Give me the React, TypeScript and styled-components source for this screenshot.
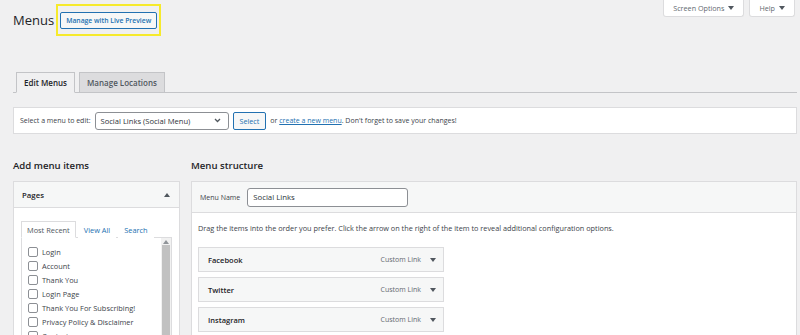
import React from 'react'
import styled, { createGlobalStyle } from 'styled-components';

const GlobalStyle = createGlobalStyle`
    html, body {
        margin: 0;
        padding: 0;
        background: #f0f0f1;
        font-family: "Open Sans", "Noto Sans", sans-serif;
        color: #3c434a;
    }
    * { box-sizing: border-box; }
`

const pages = ['Login', 'Account', 'Thank You', 'Login Page', 'Thank You For Subscribing!', 'Privacy Policy & Disclaimer', 'Contact'];
const menuItems = ['Facebook', 'Twitter', 'Instagram'];

const Caret = ({ up = false }: { up?: boolean }) => (
    <svg width="6" height="4" viewBox="0 0 6 4" style={{ transform: up ? 'rotate(180deg)' : undefined }}>
        <path d="M0 0h6L3 4z" fill="#50575e" />
    </svg>
);

export default function App() {
    return (
        <Wrap>
            <GlobalStyle />
            <TopRow>
                <TitleGroup>
                    <Title>Menus</Title>
                    <Highlight>
                        <OutlineButton $bold>Manage with Live Preview</OutlineButton>
                    </Highlight>
                </TitleGroup>
                <MetaLinks>
                    <MetaTab>Screen Options <Caret /></MetaTab>
                    <MetaTab>Help <Caret /></MetaTab>
                </MetaLinks>
            </TopRow>

            <NavTabs>
                <NavTab $active>Edit Menus</NavTab>
                <NavTab>Manage Locations</NavTab>
            </NavTabs>

            <ManageBar>
                <span>Select a menu to edit:</span>
                <FakeSelect>
                    <span>Social Links (Social Menu)</span>
                    <svg width="7" height="5" viewBox="0 0 7 5">
                        <path d="M1 1l2.5 2.5L6 1" stroke="#50575e" strokeWidth="1.3" fill="none" />
                    </svg>
                </FakeSelect>
                <OutlineButton>Select</OutlineButton>
                <span>or <TextLink>create a new menu</TextLink>. Don't forget to save your changes!</span>
            </ManageBar>

            <Columns>
                <div>
                    <ColumnTitle>Add menu items</ColumnTitle>
                    <Box>
                        <BoxHeader $height={26}>
                            <BoxTitle>Pages</BoxTitle>
                            <Caret up />
                        </BoxHeader>
                        <PagesBody>
                            <InnerTabs>
                                <InnerTab $active>Most Recent</InnerTab>
                                <InnerTab>View All</InnerTab>
                                <InnerTab>Search</InnerTab>
                            </InnerTabs>
                            <ListPanel>
                                <CheckList>
                                    {pages.map((p) => (
                                        <CheckRow key={p}>
                                            <Check type="checkbox" readOnly />
                                            {p}
                                        </CheckRow>
                                    ))}
                                </CheckList>
                                <Scrollbar>
                                    <ScrollArrow><Caret up /></ScrollArrow>
                                    <ScrollThumb />
                                </Scrollbar>
                            </ListPanel>
                        </PagesBody>
                    </Box>
                </div>
                <div>
                    <ColumnTitle>Menu structure</ColumnTitle>
                    <Box>
                        <BoxHeader $height={31}>
                            <NameRow>
                                <span>Menu Name</span>
                                <NameInput value="Social Links" readOnly />
                            </NameRow>
                        </BoxHeader>
                        <StructureBody>
                            <Hint>Drag the items into the order you prefer. Click the arrow on the right of the item to reveal additional configuration options.</Hint>
                            <ItemList>
                                {menuItems.map((m) => (
                                    <MenuItem key={m}>
                                        <ItemTitle>{m}</ItemTitle>
                                        <ItemControls>
                                            Custom Link
                                            <Caret />
                                        </ItemControls>
                                    </MenuItem>
                                ))}
                            </ItemList>
                        </StructureBody>
                    </Box>
                </div>
            </Columns>
        </Wrap>
    )
}

const Wrap = styled.div`
    padding: 0 3px 0 13px;
    height: 335px;
    overflow: hidden;
`

const TopRow = styled.div`
    display: flex;
    justify-content: space-between;
    align-items: flex-start;
`

const TitleGroup = styled.div`
    display: flex;
    align-items: center;
    gap: 2px;
    margin-top: 4px;
`

const Title = styled.h1`
    margin: 0;
    font-size: 13px;
    font-weight: 400;
    color: #1d2327;
    line-height: 20px;
`

const Highlight = styled.div`
    display: flex;
    border: 2px solid #f6ea2c;
    padding: 6px 2px 5px 2px;
`

const OutlineButton = styled.button<{ $bold?: boolean }>`
    font-family: inherit;
    font-size: ${p => p.$bold ? '6.8px' : '7.2px'};
    font-weight: ${p => p.$bold ? 600 : 400};
    color: #2271b1;
    background: #f6f7f7;
    border: 1px solid #2271b1;
    border-radius: 2px;
    height: ${p => p.$bold ? '17px' : '18px'};
    padding: 0 ${p => p.$bold ? '5px' : '6px'};
    cursor: pointer;
`

const MetaLinks = styled.div`
    display: flex;
    gap: 5px;
    padding-right: 2px;
`

const MetaTab = styled.div`
    display: flex;
    align-items: center;
    gap: 4px;
    height: 17px;
    padding: 0 9px 0 9px;
    background: #fff;
    border: 1px solid #dcdcde;
    border-top: none;
    border-radius: 0 0 3px 3px;
    font-size: 7.2px;
    color: #646970;
`

const NavTabs = styled.div`
    display: flex;
    gap: 4px;
    margin-top: 36px;
    padding-left: 3px;
    border-bottom: 1px solid #c3c4c7;
`

const NavTab = styled.div<{ $active?: boolean }>`
    height: 21px;
    margin-bottom: -1px;
    display: flex;
    align-items: center;
    padding: 0 7px;
    font-size: 8px;
    font-weight: 600;
    border: 1px solid #c3c4c7;
    border-bottom: ${p => p.$active ? '1px solid #f0f0f1' : '1px solid #c3c4c7'};
    background: ${p => p.$active ? '#f0f0f1' : '#dcdcde'};
    color: ${p => p.$active ? '#1d2327' : '#50575e'};
`

const ManageBar = styled.div`
    margin-top: 14px;
    height: 27px;
    background: #fff;
    border: 1px solid #dcdcde;
    display: flex;
    align-items: center;
    gap: 4px;
    padding: 0 6px;
    font-size: 7px;
`

const FakeSelect = styled.div`
    width: 134px;
    height: 18px;
    border: 1px solid #8c8f94;
    border-radius: 3px;
    background: #fff;
    display: flex;
    align-items: center;
    justify-content: space-between;
    padding: 0 7px 0 5px;
    font-size: 7.6px;
    color: #2c3338;
`

const TextLink = styled.a`
    color: #2271b1;
    text-decoration: underline;
`

const Columns = styled.div`
    display: grid;
    grid-template-columns: 167px 1fr;
    gap: 11px;
`

const ColumnTitle = styled.h2`
    margin: 25px 0 8px;
    font-size: 9.6px;
    line-height: 14px;
    font-weight: 600;
    color: #1d2327;
`

const Box = styled.div`
    background: #fff;
    border: 1px solid #dcdcde;
    height: 200px;
`

const BoxHeader = styled.div<{ $height: number }>`
    height: ${p => p.$height}px;
    background: #f6f7f7;
    border-bottom: 1px solid #dcdcde;
    display: flex;
    align-items: center;
    justify-content: space-between;
    padding: 0 9px 0 8px;
`

const BoxTitle = styled.h3`
    margin: 0;
    font-size: 7.8px;
    font-weight: 600;
    color: #1d2327;
`

const PagesBody = styled.div`
    padding: 13px 7px 0 7px;
`

const InnerTabs = styled.div`
    display: flex;
    gap: 2px;
`

const InnerTab = styled.div<{ $active?: boolean }>`
    height: 17px;
    margin-bottom: -1px;
    display: flex;
    align-items: center;
    padding: 0 5px;
    font-size: 7.4px;
    border: 1px solid ${p => p.$active ? '#dcdcde' : 'transparent'};
    border-bottom-color: ${p => p.$active ? '#fff' : 'transparent'};
    background: #fff;
    color: ${p => p.$active ? '#50575e' : '#2271b1'};
    position: relative;
`

const ListPanel = styled.div`
    border: 1px solid #dcdcde;
    height: 120px;
    display: flex;
    justify-content: space-between;
`

const CheckList = styled.ul`
    list-style: none;
    margin: 0;
    padding: 7px 0 0 6px;
`

const CheckRow = styled.li`
    display: flex;
    align-items: center;
    gap: 4px;
    height: 14px;
    font-size: 7.4px;
    color: #3c434a;
`

const Check = styled.input`
    appearance: none;
    margin: 0;
    width: 10px;
    height: 10px;
    border: 1px solid #8c8f94;
    border-radius: 2px;
    background: #fff;
`

const Scrollbar = styled.div`
    width: 10px;
    background: #f1f1f1;
    display: flex;
    flex-direction: column;
    align-items: center;
`

const ScrollArrow = styled.div`
    height: 7px;
    display: flex;
    align-items: center;
    opacity: 0.6;
`

const ScrollThumb = styled.div`
    width: 8px;
    flex: 1;
    background: #c1c1c1;
`

const NameRow = styled.div`
    display: flex;
    align-items: center;
    gap: 7px;
    font-size: 7px;
    color: #3c434a;
`

const NameInput = styled.input`
    width: 161px;
    height: 19px;
    border: 1px solid #8c8f94;
    border-radius: 3px;
    padding: 0 5px;
    font-family: inherit;
    font-size: 7.8px;
    color: #2c3338;
    outline: none;
`

const StructureBody = styled.div`
    padding: 10px 6px 0 6px;
`

const Hint = styled.p`
    margin: 0;
    font-size: 7.3px;
    line-height: 10px;
    color: #3c434a;
`

const ItemList = styled.div`
    margin-top: 14px;
    display: flex;
    flex-direction: column;
    gap: 5px;
    width: 246px;
`

const MenuItem = styled.div`
    height: 25px;
    background: #f6f7f7;
    border: 1px solid #dcdcde;
    display: flex;
    align-items: center;
    justify-content: space-between;
    padding: 0 7px 0 9px;
`

const ItemTitle = styled.span`
    font-size: 7.5px;
    font-weight: 600;
    color: #1d2327;
`

const ItemControls = styled.span`
    display: flex;
    align-items: center;
    gap: 9px;
    font-size: 7px;
    color: #646970;
`
